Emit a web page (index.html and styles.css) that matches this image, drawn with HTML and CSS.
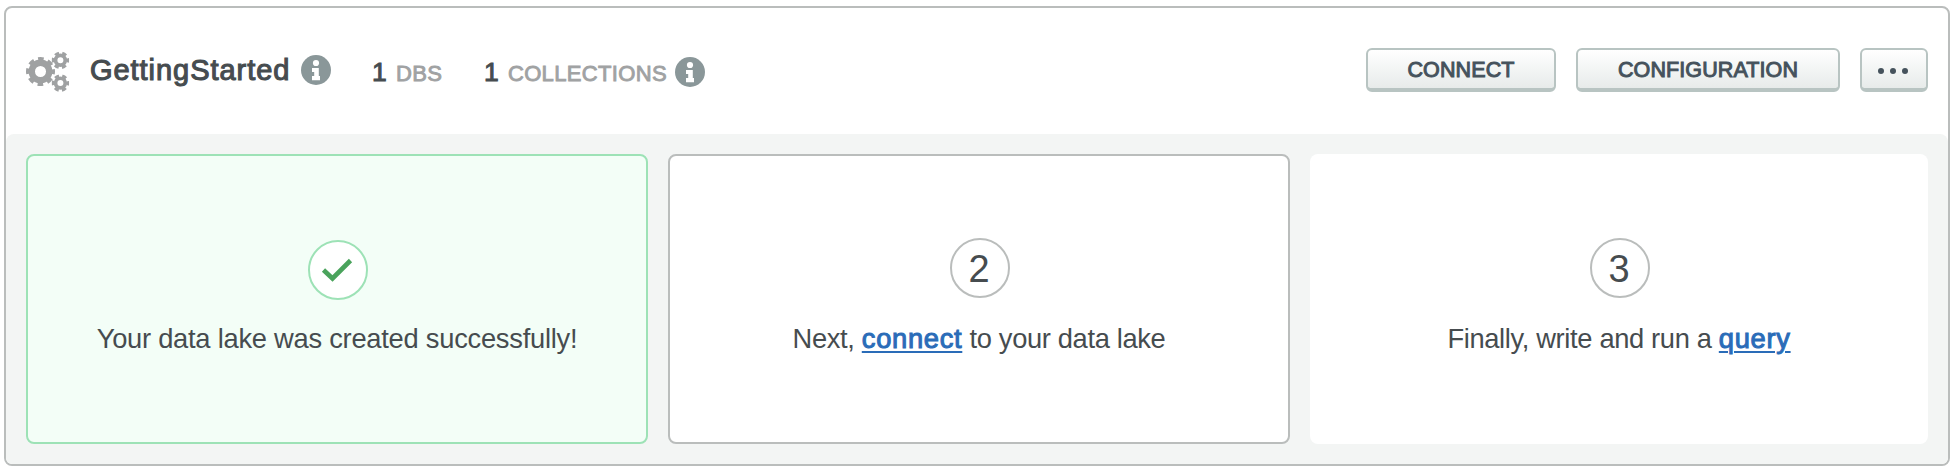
FILE: index.html
```html
<!DOCTYPE html>
<html lang="en">
<head>
<meta charset="utf-8">
<title>GettingStarted</title>
<link rel="stylesheet" href="styles.css">
</head>
<body>
<svg class="defs" width="0" height="0" aria-hidden="true">
  <symbol id="gear" viewBox="-50 -50 100 100">
    <circle r="30" fill="none" stroke="#9fa1a2" stroke-width="22"/>
    <circle r="43" fill="none" stroke="#9fa1a2" stroke-width="14" stroke-dasharray="19 14.770" stroke-dashoffset="9.500"/>
  </symbol>
  <symbol id="cog" viewBox="-50 -50 100 100">
    <circle r="27.500" fill="none" stroke="#9fa1a2" stroke-width="21"/>
    <circle r="42" fill="none" stroke="#9fa1a2" stroke-width="16" stroke-dasharray="25 18.980" stroke-dashoffset="12.500"/>
  </symbol>
  <symbol id="info" viewBox="0 0 30 30">
    <circle cx="15" cy="15" r="15" fill="#8a9799"/>
    <circle cx="15" cy="8" r="3.100" fill="#fff"/>
    <path d="M11 13h6.800v8H19v4.200H11V21h2.200v-4H11z" fill="#fff"/>
  </symbol>
</svg>
<main class="panel">
  <header class="header">
    <svg class="gears" viewBox="0 0 44 40">
      <use href="#gear" x="0" y="5" width="29" height="29"/>
      <use href="#cog" x="25.600" y="-.500" width="17.600" height="17.600"/>
      <use href="#cog" x="25.600" y="22.300" width="17.600" height="17.600"/>
    </svg>
    <h1 class="title">GettingStarted</h1>
    <svg class="info info-title"><use href="#info"/></svg>
    <div class="stat stat-dbs"><span class="count">1</span><span class="label">DBS</span></div>
    <div class="stat stat-collections"><span class="count">1</span><span class="label">COLLECTIONS</span></div>
    <svg class="info info-stats"><use href="#info"/></svg>
    <div class="actions">
      <button class="button connect">CONNECT</button>
      <button class="button configuration">CONFIGURATION</button>
      <button class="button more" aria-label="More"><i class="dot"></i><i class="dot"></i><i class="dot"></i></button>
    </div>
  </header>
  <section class="steps">
    <article class="step done">
      <div class="badge"><svg class="check" viewBox="0 0 32 24"><path d="M2.500 12L11.500 20.500 29.500 2.500" fill="none" stroke="#4aa35c" stroke-width="4.600"/></svg></div>
      <p class="text text-done">Your data lake was created successfully!</p>
    </article>
    <article class="step current">
      <div class="badge">2</div>
      <p class="text">Next, <a class="link" href="#">connect</a> to your data lake</p>
    </article>
    <article class="step">
      <div class="badge">3</div>
      <p class="text">Finally, write and run a <a class="link" href="#">query</a></p>
    </article>
  </section>
</main>
</body>
</html>
```
FILE: styles.css
```css
* { box-sizing: border-box; }
body {
  margin: 0;
  padding: 6px 6px 6px 4px;
  background: #fff;
  color: #464c4f;
  font-family: "Liberation Sans", Arial, sans-serif;
}
.defs { position: absolute; }
.panel {
  height: 460px;
  border: 2px solid #babdbc;
  border-radius: 8px;
  overflow: hidden;
  display: flex;
  flex-direction: column;
}
.header {
  height: 126px;
  flex: none;
  display: flex;
  align-items: flex-start;
  padding: 0 20px;
}
.gears { width: 44px; height: 40px; margin-top: 44px; overflow: visible; }
.title {
  margin: 46px 0 0 20px;
  width: 203px;
  font-size: 29px;
  line-height: 32px;
  font-weight: 400;
  letter-spacing: 0.950px;
  -webkit-text-stroke: 1.100px currentColor;
  white-space: nowrap;
}
.info { width: 30px; height: 30px; flex: none; }
.info-title { margin: 47px 0 0 8px; }
.info-stats { margin: 49px 0 0 8px; }
.stat {
  display: flex;
  align-items: baseline;
  margin-top: 49px;
  line-height: 30px;
  white-space: nowrap;
}
.stat-dbs { width: 112px; margin-left: 41px; }
.stat-collections { width: 183px; }
.count { width: 24px; font-size: 26.500px; -webkit-text-stroke: 1px currentColor; }
.label { color: #a0a2a3; font-size: 22px; letter-spacing: 0.350px; -webkit-text-stroke: 0.900px currentColor; }
.actions { margin: 40px 0 0 auto; display: flex; gap: 20px; }
.button {
  height: 44px;
  padding: 2px 0 0;
  border: 2px solid #b8c4c2;
  border-bottom-width: 4px;
  border-radius: 6px;
  background: linear-gradient(#fff, #e7ebea);
  color: #45525c;
  font: 400 21.500px/36px "Liberation Sans", Arial, sans-serif;
  letter-spacing: 0.100px;
  -webkit-text-stroke: 1px currentColor;
}
.connect { width: 190px; }
.configuration { width: 264px; }
.more { width: 68px; display: flex; align-items: center; justify-content: center; gap: 6px; padding: 4px 2px 0 0; }
.dot { width: 6px; height: 6px; border-radius: 50%; background: #45525c; }
.steps {
  flex: 1;
  display: flex;
  gap: 20px;
  padding: 20px;
  background: #f3f5f4;
  border-radius: 8px 8px 0 0;
}
.step {
  width: 618px;
  height: 290px;
  border-radius: 8px;
  background: #fff;
  display: flex;
  flex-direction: column;
  align-items: center;
  padding-top: 84px;
}
.done { width: 622px; border: 2px solid #9de2b6; background: #f3fef7; }
.current { width: 622px; border: 2px solid #babdbc; padding-top: 82px; }
.badge {
  width: 60px;
  height: 60px;
  margin-left: 2px;
  padding-right: 2px;
  border: 2px solid #babdbc;
  border-radius: 50%;
  background: #fff;
  font-size: 38px;
  line-height: 58px;
  text-align: center;
}
.done .badge { border-color: #9de2b6; display: flex; align-items: center; justify-content: center; }
.check { width: 32px; height: 24px; }
.text {
  margin: 25px 0 0;
  font-size: 27.300px;
  line-height: 32px;
  letter-spacing: -0.350px;
  white-space: nowrap;
}
.text-done { margin-top: 23px; letter-spacing: -0.250px; }
.link {
  color: #2a6cb8;
  letter-spacing: 0.700px;
  -webkit-text-stroke: 1px currentColor;
  text-decoration-thickness: 2px;
  text-underline-offset: 3px;
}
```
